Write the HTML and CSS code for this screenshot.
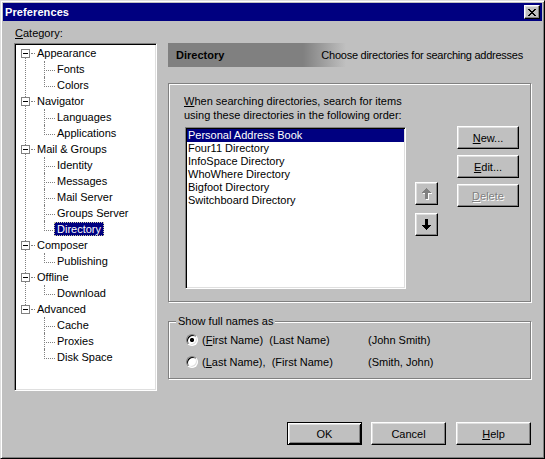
FILE: index.html
```html
<!DOCTYPE html>
<html>
<head>
<meta charset="utf-8">
<title>Preferences</title>
<link rel="stylesheet" href="styles.css">
</head>
<body>
<div class="window">
  <div class="titlebar">
    <span class="title">Preferences</span>
    <button class="close" type="button" aria-label="Close">
      <svg width="8" height="7" viewBox="0 0 8 7"><path d="M0 0h2v1H0zM6 0h2v1H6zM1 1h2v1H1zM5 1h2v1H5zM2 2h4v1H2zM3 3h2v1H3zM2 4h4v1H2zM1 5h2v1H1zM5 5h2v1H5zM0 6h2v1H0zM6 6h2v1H6z" fill="#000"/></svg>
    </button>
  </div>
  <div class="client">
    <div class="main">
      <div class="cat-label"><u>C</u>ategory:</div>
      <ul class="tree">
        <li class="node">
          <div class="row"><span class="exp"></span><span class="hdots"></span><span class="txt">Appearance</span></div>
          <ul class="children">
            <li><span class="lbl">Fonts</span></li>
            <li><span class="lbl">Colors</span></li>
          </ul>
        </li>
        <li class="node">
          <div class="row"><span class="exp"></span><span class="hdots"></span><span class="txt">Navigator</span></div>
          <ul class="children">
            <li><span class="lbl">Languages</span></li>
            <li><span class="lbl">Applications</span></li>
          </ul>
        </li>
        <li class="node">
          <div class="row"><span class="exp"></span><span class="hdots"></span><span class="txt">Mail &amp; Groups</span></div>
          <ul class="children">
            <li><span class="lbl">Identity</span></li>
            <li><span class="lbl">Messages</span></li>
            <li><span class="lbl">Mail Server</span></li>
            <li><span class="lbl">Groups Server</span></li>
            <li class="selected"><span class="lbl">Directory</span></li>
          </ul>
        </li>
        <li class="node">
          <div class="row"><span class="exp"></span><span class="hdots"></span><span class="txt">Composer</span></div>
          <ul class="children">
            <li><span class="lbl">Publishing</span></li>
          </ul>
        </li>
        <li class="node">
          <div class="row"><span class="exp"></span><span class="hdots"></span><span class="txt">Offline</span></div>
          <ul class="children">
            <li><span class="lbl">Download</span></li>
          </ul>
        </li>
        <li class="node">
          <div class="row"><span class="exp"></span><span class="hdots"></span><span class="txt">Advanced</span></div>
          <ul class="children">
            <li><span class="lbl">Cache</span></li>
            <li><span class="lbl">Proxies</span></li>
            <li><span class="lbl">Disk Space</span></li>
          </ul>
        </li>
      </ul>

      <div class="panel">
        <div class="ph">
          <span class="ph-title">Directory</span>
          <span class="ph-desc">Choose directories for searching addresses</span>
        </div>

        <div class="group dirs">
          <div class="group-label"><u>W</u>hen searching directories, search for items<br>using these directories in the following order:</div>
          <div class="dir-row">
            <ul class="listbox">
              <li class="sel">Personal Address Book</li>
              <li>Four11 Directory</li>
              <li>InfoSpace Directory</li>
              <li>WhoWhere Directory</li>
              <li>Bigfoot Directory</li>
              <li>Switchboard Directory</li>
            </ul>
            <div class="arrows">
              <button class="btn arrow" type="button" disabled aria-label="Move up">
                <svg width="10" height="12" viewBox="0 0 10 12">
                  <path transform="translate(1 1)" d="M4 0h1v1h1v1h1v1h1v1h1v1H6v6H3V5H0V4h1V3h1V2h1V1h1z" fill="#fff"/>
                  <path d="M4 0h1v1h1v1h1v1h1v1h1v1H6v6H3V5H0V4h1V3h1V2h1V1h1z" fill="#808080"/>
                </svg>
              </button>
              <button class="btn arrow" type="button" aria-label="Move down">
                <svg width="10" height="12" viewBox="0 0 10 12">
                  <path d="M3 0h3v6h3v1H8v1H7v1H6v1H5v1H4v-1H3V9H2V8H1V7H0V6h3z" fill="#000"/>
                </svg>
              </button>
            </div>
            <div class="actions">
              <button class="btn act" type="button"><u>N</u>ew...</button>
              <button class="btn act" type="button"><u>E</u>dit...</button>
              <button class="btn act" type="button" disabled><u>D</u>elete</button>
            </div>
          </div>
        </div>

        <div class="group names">
          <span class="legend">Show full names as</span>
          <label class="radio-row">
            <span class="radio checked"></span>
            <span class="rl">(<u>F</u>irst Name)  (Last Name)</span>
            <span class="ex">(John Smith)</span>
          </label>
          <label class="radio-row">
            <span class="radio"></span>
            <span class="rl">(<u>L</u>ast Name),  (First Name)</span>
            <span class="ex">(Smith, John)</span>
          </label>
        </div>
      </div>
    </div>

    <div class="footer">
      <button class="btn foot default" type="button">OK</button>
      <button class="btn foot cancel" type="button">Cancel</button>
      <button class="btn foot help" type="button"><u>H</u>elp</button>
    </div>
  </div>
</div>
</body>
</html>
```

FILE: styles.css
```css
* { box-sizing: border-box; }

html, body {
  margin: 0;
  padding: 0;
}

body {
  width: 545px;
  height: 459px;
  overflow: hidden;
  background: #c0c0c0;
  font-family: "Liberation Sans", Arial, sans-serif;
  font-size: 11px;
  color: #000;
}

ul { list-style: none; margin: 0; padding: 0; }

u { text-decoration: underline; text-underline-offset: 1px; }

.window {
  width: 545px;
  height: 459px;
  background: #c0c0c0;
  border: 1px solid;
  border-color: #dfdfdf #000 #000 #dfdfdf;
  box-shadow: inset 1px 1px #fff, inset -1px -1px #808080;
  padding: 2px;
  display: flex;
  flex-direction: column;
}

/* Title bar */
.titlebar {
  height: 18px;
  flex: none;
  background: #000080;
  color: #fff;
  display: flex;
  align-items: center;
  justify-content: space-between;
  padding: 0 2px 0 2px;
}

.title {
  font-weight: bold;
  font-size: 11px;
  letter-spacing: 0.1px;
}

.close {
  width: 16px;
  height: 14px;
  padding: 0;
  margin: 0;
  background: #c0c0c0;
  border: 1px solid;
  border-color: #fff #000 #000 #fff;
  box-shadow: inset -1px -1px #808080, inset 1px 1px #dfdfdf;
  display: flex;
  align-items: center;
  justify-content: center;
}

.close svg { display: block; }

/* Client area */
.client {
  flex: 1;
  padding: 6px 11px 0 11px;
  display: flex;
  flex-direction: column;
}

.main {
  display: grid;
  grid-template-columns: 143px 363px;
  grid-template-rows: 13px 348px;
  column-gap: 11px;
  row-gap: 3px;
}

.cat-label {
  grid-column: 1;
  grid-row: 1;
  line-height: 13px;
  padding-left: 1px;
}

/* Tree */
.tree {
  grid-column: 1;
  grid-row: 2;
  background: #fff;
  border: 1px solid;
  border-color: #808080 #fff #fff #808080;
  box-shadow: inset 1px 1px #000, inset -1px -1px #dfdfdf;
  padding: 1px;
}

.node { position: relative; }

.node:not(:last-child)::before {
  content: "";
  position: absolute;
  left: 9px;
  top: 13px;
  bottom: -4px;
  border-left: 1px dotted #808080;
}

.row {
  height: 16px;
  display: flex;
  align-items: flex-start;
  padding-left: 5px;
}

.exp {
  width: 9px;
  height: 9px;
  margin-top: 4px;
  border: 1px solid #808080;
  background: #fff;
  display: flex;
  align-items: center;
  justify-content: center;
  flex: none;
}

.exp::after {
  content: "";
  width: 5px;
  height: 1px;
  background: #000;
}

.hdots {
  width: 4px;
  height: 1px;
  margin: 8px 2px 0 1px;
  border-top: 1px dotted #808080;
  flex: none;
}

.txt {
  line-height: 16px;
  white-space: nowrap;
}

.children li {
  position: relative;
  height: 16px;
  display: flex;
  align-items: center;
  padding-left: 38px;
}

.children li::before {
  content: "";
  position: absolute;
  left: 28px;
  top: 0;
  width: 10px;
  height: 9px;
  border-left: 1px dotted #808080;
  border-bottom: 1px dotted #808080;
}

.children li:not(:last-child)::after {
  content: "";
  position: absolute;
  left: 28px;
  top: 9px;
  bottom: 0;
  border-left: 1px dotted #808080;
}

.lbl {
  display: inline-block;
  padding: 0 2px;
  border: 1px solid transparent;
  line-height: 12px;
  white-space: nowrap;
}

.children li.selected .lbl {
  background: #000080;
  color: #fff;
  border: 1px dotted #c8c8a0;
}

/* Right panel */
.panel {
  grid-column: 2;
  grid-row: 2;
  display: flex;
  flex-direction: column;
}

.ph {
  height: 24px;
  flex: none;
  margin-bottom: 16px;
  display: flex;
  align-items: center;
  justify-content: space-between;
  padding: 0 8px 0 8px;
  background: linear-gradient(90deg, #808080 0, #808080 135px, #c0c0c0 178px, #c0c0c0 100%);
}

.ph-title { font-weight: bold; }

.ph-desc {
  letter-spacing: -0.25px;
  white-space: nowrap;
}

.group {
  border: 1px solid #808080;
  box-shadow: inset 1px 1px #fff, 1px 1px #fff;
}

.dirs {
  height: 219px;
  flex: none;
  margin-bottom: 19px;
  padding: 10px 0 0 15px;
}

.group-label {
  line-height: 14px;
  white-space: nowrap;
}

.dir-row {
  margin-top: 5px;
  display: flex;
  align-items: flex-start;
}

.listbox {
  width: 221px;
  height: 162px;
  margin-left: 1px;
  background: #fff;
  border: 1px solid;
  border-color: #808080 #fff #fff #808080;
  box-shadow: inset 1px 1px #000, inset -1px -1px #dfdfdf;
  padding: 1px;
}

.listbox li {
  height: 13px;
  line-height: 13px;
  padding-left: 1px;
  white-space: nowrap;
}

.listbox li.sel {
  background: #000080;
  color: #fff;
}

/* Buttons */
.btn {
  font-family: "Liberation Sans", Arial, sans-serif;
  font-size: 11px;
  color: #000;
  background: #c0c0c0;
  border: 1px solid;
  border-color: #fff #000 #000 #fff;
  box-shadow: inset -1px -1px #808080, inset 1px 1px #dfdfdf;
  padding: 0;
  margin: 0;
  display: flex;
  align-items: center;
  justify-content: center;
}

.btn:disabled {
  color: #808080;
  text-shadow: 1px 1px #fff;
}

.arrows {
  margin-left: 9px;
  padding-top: 55px;
  display: flex;
  flex-direction: column;
  gap: 8px;
}

.arrow {
  width: 23px;
  height: 23px;
}

.arrow svg { display: block; }

.actions {
  margin-left: 19px;
  margin-top: -1px;
  display: flex;
  flex-direction: column;
  gap: 6px;
}

.act {
  width: 62px;
  height: 23px;
}

/* Names group */
.names {
  height: 58px;
  flex: none;
  position: relative;
  padding: 7px 0 0 17px;
}

.legend {
  position: absolute;
  left: 7px;
  top: -7px;
  padding: 0 2px;
  background: #c0c0c0;
  line-height: 13px;
}

.radio-row {
  height: 22px;
  display: flex;
  align-items: center;
}

.radio {
  width: 12px;
  height: 12px;
  flex: none;
  border-radius: 50%;
  border: 1px solid;
  border-color: #808080 #fff #fff #808080;
  box-shadow: inset 1px 1px #000, inset -1px -1px #dfdfdf;
  background: #fff;
}

.radio.checked {
  background: radial-gradient(circle, #000 0, #000 1.8px, #fff 2.4px);
}

.rl {
  margin-left: 4px;
  width: 166px;
  white-space: pre;
}

.ex { white-space: nowrap; }

/* Footer */
.footer {
  margin-top: 31px;
  display: flex;
  justify-content: flex-end;
}

.foot {
  width: 75px;
  height: 23px;
}

.cancel { margin-left: 9px; }
.help { margin-left: 10px; }

.default {
  border-color: #000;
  box-shadow: inset 1px 1px #fff, inset -1px -1px #000, inset 2px 2px #dfdfdf, inset -2px -2px #808080;
}
```
